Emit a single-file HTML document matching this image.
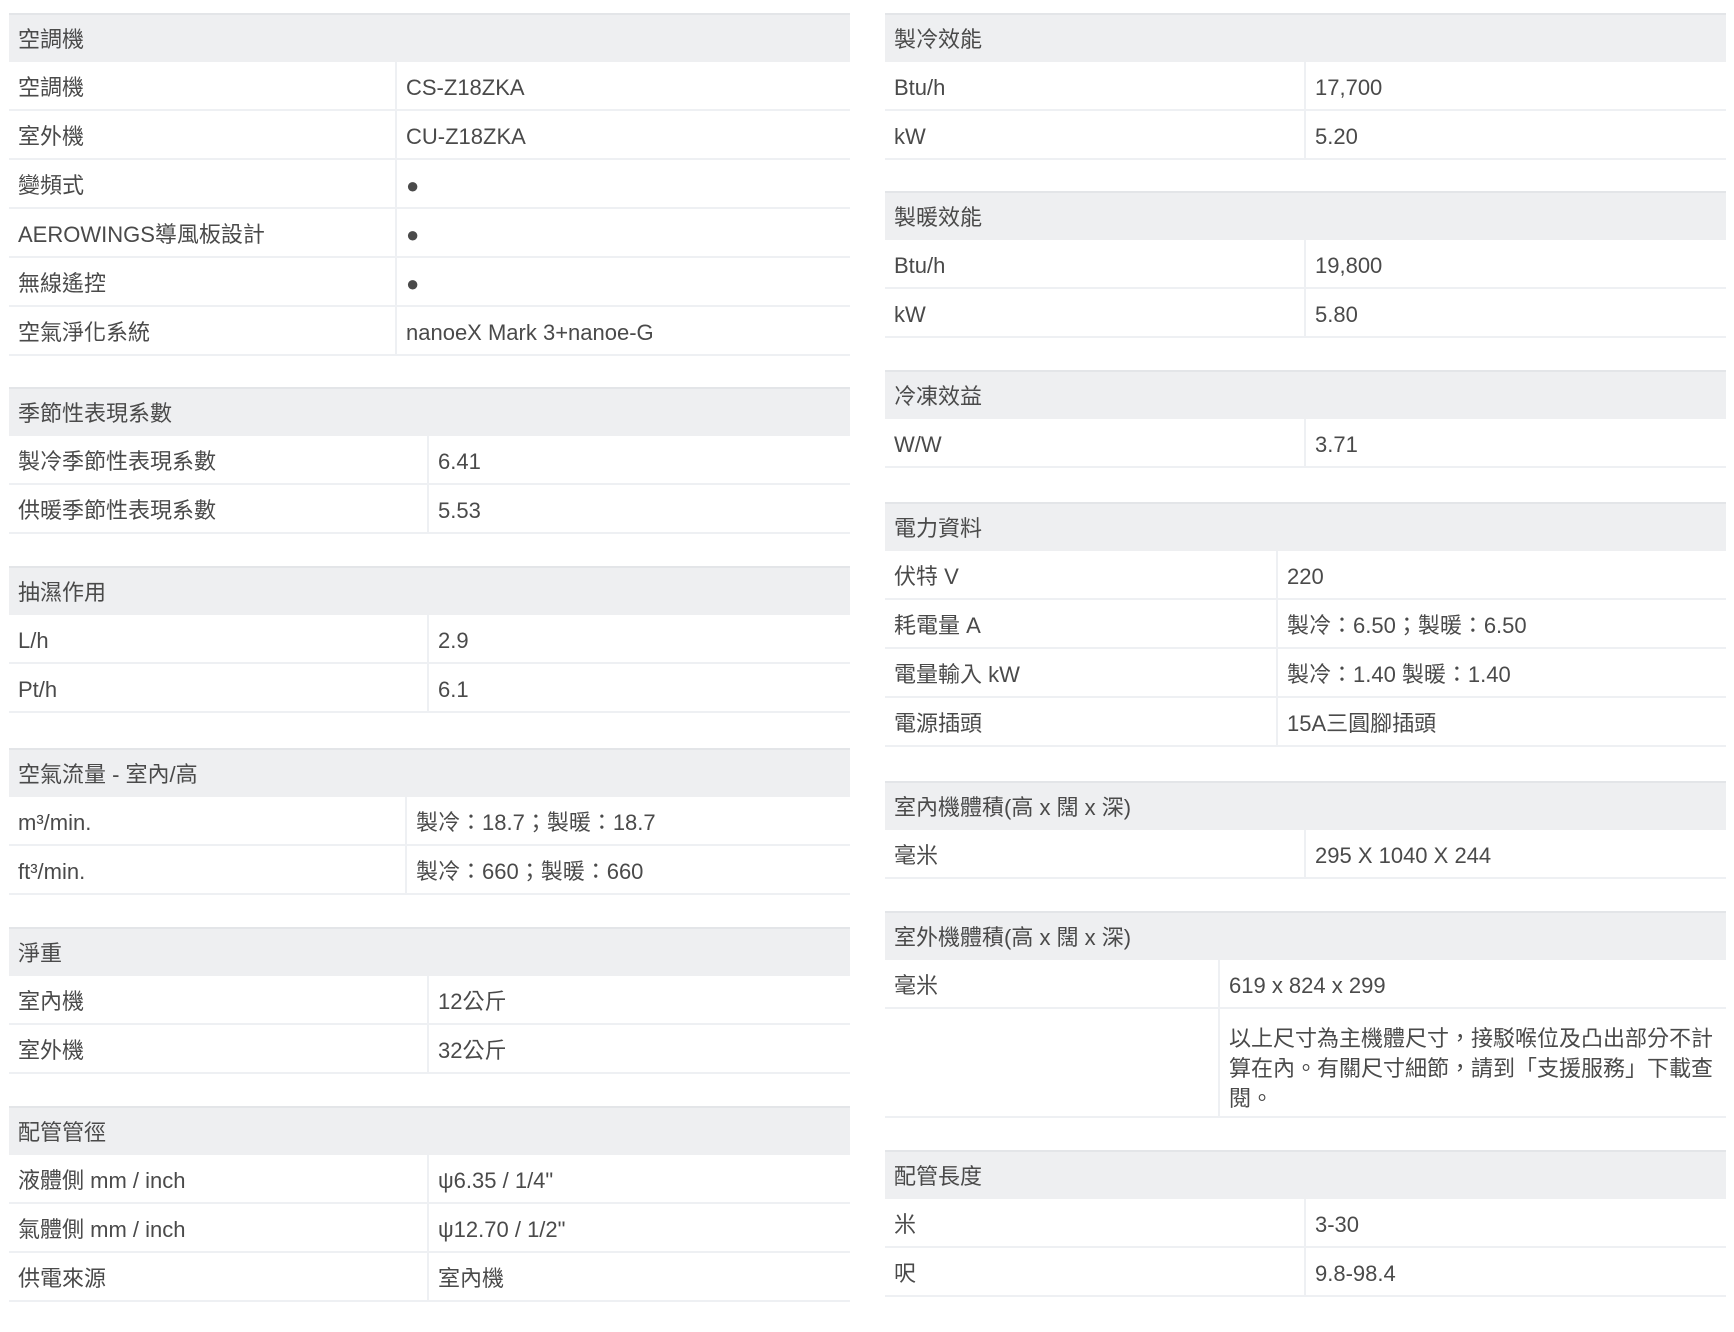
<!DOCTYPE html>
<html><head><meta charset="utf-8"><style>
*{margin:0;padding:0;box-sizing:border-box}
body{width:1734px;height:1332px;background:#fff;position:relative;overflow:hidden;font-family:"Liberation Sans","Noto Sans CJK TC",sans-serif;font-size:22px;color:#4a4a4a}
.t{position:absolute}
.h{height:49px;background:#eeeff1;border-top:2px solid #e3e5e8;padding-left:9px;padding-top:2px;line-height:46px;white-space:nowrap}
.r{display:flex;height:49px;border-bottom:2px solid #eef0f3}
.r>div{line-height:47px;padding-left:9px;padding-top:2px;white-space:nowrap}
.r>.k{border-right:2px solid #eef0f3}
.tall{height:109px}
.tall>.v{line-height:30px;padding-top:15px!important}
</style></head><body>

<div class="t" style="left:9px;top:13px;width:841px">
<div class="h">空調機</div>
<div class="r"><div class="k" style="width:388px">空調機</div><div class="v">CS-Z18ZKA</div></div>
<div class="r"><div class="k" style="width:388px">室外機</div><div class="v">CU-Z18ZKA</div></div>
<div class="r"><div class="k" style="width:388px">變頻式</div><div class="v">●</div></div>
<div class="r"><div class="k" style="width:388px">AEROWINGS導風板設計</div><div class="v">●</div></div>
<div class="r"><div class="k" style="width:388px">無線遙控</div><div class="v">●</div></div>
<div class="r"><div class="k" style="width:388px">空氣淨化系統</div><div class="v">nanoeX Mark 3+nanoe-G</div></div>
</div>

<div class="t" style="left:9px;top:387px;width:841px">
<div class="h">季節性表現系數</div>
<div class="r"><div class="k" style="width:420px">製冷季節性表現系數</div><div class="v">6.41</div></div>
<div class="r"><div class="k" style="width:420px">供暖季節性表現系數</div><div class="v">5.53</div></div>
</div>

<div class="t" style="left:9px;top:566px;width:841px">
<div class="h">抽濕作用</div>
<div class="r"><div class="k" style="width:420px">L/h</div><div class="v">2.9</div></div>
<div class="r"><div class="k" style="width:420px">Pt/h</div><div class="v">6.1</div></div>
</div>

<div class="t" style="left:9px;top:748px;width:841px">
<div class="h">空氣流量 - 室內/高</div>
<div class="r"><div class="k" style="width:398px">m³/min.</div><div class="v">製冷：18.7；製暖：18.7</div></div>
<div class="r"><div class="k" style="width:398px">ft³/min.</div><div class="v">製冷：660；製暖：660</div></div>
</div>

<div class="t" style="left:9px;top:927px;width:841px">
<div class="h">淨重</div>
<div class="r"><div class="k" style="width:420px">室內機</div><div class="v">12公斤</div></div>
<div class="r"><div class="k" style="width:420px">室外機</div><div class="v">32公斤</div></div>
</div>

<div class="t" style="left:9px;top:1106px;width:841px">
<div class="h">配管管徑</div>
<div class="r"><div class="k" style="width:420px">液體側 mm / inch</div><div class="v">ψ6.35 / 1/4"</div></div>
<div class="r"><div class="k" style="width:420px">氣體側 mm / inch</div><div class="v">ψ12.70 / 1/2"</div></div>
<div class="r"><div class="k" style="width:420px">供電來源</div><div class="v">室內機</div></div>
</div>

<div class="t" style="left:885px;top:13px;width:841px">
<div class="h">製冷效能</div>
<div class="r"><div class="k" style="width:421px">Btu/h</div><div class="v">17,700</div></div>
<div class="r"><div class="k" style="width:421px">kW</div><div class="v">5.20</div></div>
</div>

<div class="t" style="left:885px;top:191px;width:841px">
<div class="h">製暖效能</div>
<div class="r"><div class="k" style="width:421px">Btu/h</div><div class="v">19,800</div></div>
<div class="r"><div class="k" style="width:421px">kW</div><div class="v">5.80</div></div>
</div>

<div class="t" style="left:885px;top:370px;width:841px">
<div class="h">冷凍效益</div>
<div class="r"><div class="k" style="width:421px">W/W</div><div class="v">3.71</div></div>
</div>

<div class="t" style="left:885px;top:502px;width:841px">
<div class="h">電力資料</div>
<div class="r"><div class="k" style="width:393px">伏特 V</div><div class="v">220</div></div>
<div class="r"><div class="k" style="width:393px">耗電量 A</div><div class="v">製冷：6.50；製暖：6.50</div></div>
<div class="r"><div class="k" style="width:393px">電量輸入 kW</div><div class="v">製冷：1.40 製暖：1.40</div></div>
<div class="r"><div class="k" style="width:393px">電源插頭</div><div class="v">15A三圓腳插頭</div></div>
</div>

<div class="t" style="left:885px;top:781px;width:841px">
<div class="h">室內機體積(高 x 闊 x 深)</div>
<div class="r"><div class="k" style="width:421px">毫米</div><div class="v">295 X 1040 X 244</div></div>
</div>

<div class="t" style="left:885px;top:911px;width:841px">
<div class="h">室外機體積(高 x 闊 x 深)</div>
<div class="r"><div class="k" style="width:335px">毫米</div><div class="v">619 x 824 x 299</div></div>
<div class="r tall"><div class="k" style="width:335px"></div><div class="v">以上尺寸為主機體尺寸，接駁喉位及凸出部分不計<br>算在內。有關尺寸細節，請到「支援服務」下載查<br>閱。</div></div>
</div>

<div class="t" style="left:885px;top:1150px;width:841px">
<div class="h">配管長度</div>
<div class="r"><div class="k" style="width:421px">米</div><div class="v">3-30</div></div>
<div class="r"><div class="k" style="width:421px">呎</div><div class="v">9.8-98.4</div></div>
</div>

</body></html>
